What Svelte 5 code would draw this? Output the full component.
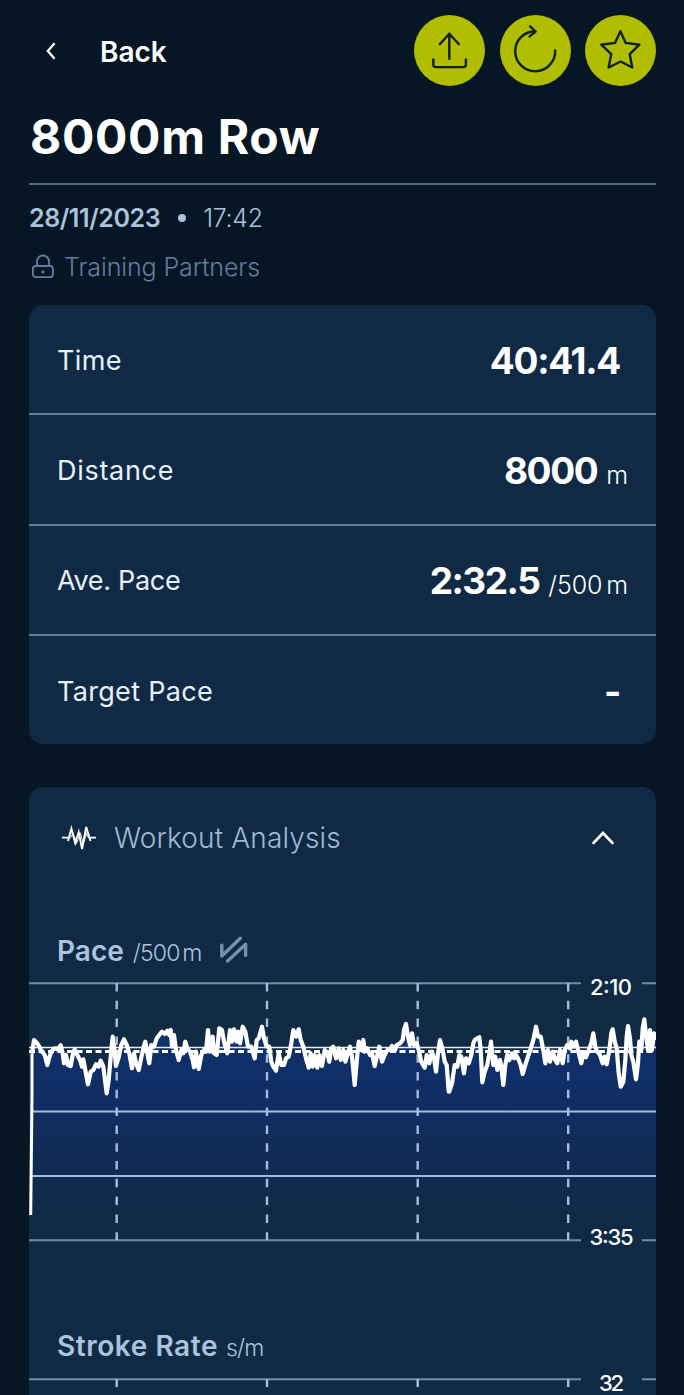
<script lang="ts">
	const stats = [
		{ label: 'Time', value: '40:41.4', unit: '', cls: 'time' },
		{ label: 'Distance', value: '8000', unit: 'm', cls: 'distance' },
		{ label: 'Ave. Pace', value: '2:32.5', unit: '/500 m', cls: 'pace' },
		{ label: 'Target Pace', value: '-', unit: '', cls: 'target' }
	];

	const splits = [87.7, 238, 388.7, 539.2];

	// pace samples, stored in thirds of a pixel relative to each section's origin
	const sections = [
		{ x: -9, y: -10, samples: [32,735,36,375,36,250,42,210,50,218,58,230,66,245,74,255,82,285,88,262,95,243,104,235,112,238,122,226,128,250,132,280,138,255,144,285,152,288,158,255,164,238,172,255,180,270,186,290,190,268,196,300,204,343,212,305,220,300,228,283,236,290,242,272,250,290,260,370,266,330,274,240,278,200,284,245,288,288,296,262,304,225,312,208,320,225,328,250,336,295,342,250,348,280,356,300,364,262,370,235,376,215,382,250,388,280,394,225,402,230,410,205,418,195,426,185,434,192,442,182,448,195,452,180,456,230,462,195,468,240,476,270,484,240,490,250,496,215,502,235,510,245,518,270,522,292,528,245,536,297,544,255,552,240,558,245,564,180,570,245,578,200,582,250,590,255,598,175,606,180,612,215,622,250,630,180,636,215,642,178,650,215,655,185] },
		{ x: 201, y: 20, samples: [30,130,38,80,46,95,54,140,64,140,74,175,80,120,86,115,96,80,102,115,110,140,118,140,124,185,130,200,138,212,146,160,154,195,162,195,168,175,176,170,184,130,190,90,198,110,206,88,212,120,220,140,228,175,236,203,242,160,248,200,254,165,262,203,268,165,276,198,284,150,292,160,298,185,304,145,310,140,318,175,326,145,332,180,340,150,346,185,352,165,360,140,366,170,374,255,382,165,386,125,392,150,400,120,404,155,412,145,420,165,426,160,434,198,442,165,448,140,456,185,464,165,472,150,480,150,486,138,494,152,500,135,510,130,518,120,522,90,528,72,534,110,540,135,546,100,552,135,560,130,566,150,574,185,584,203,590,165,598,190,606,155,612,175,618,215,624,160,630,120,638,150,644,185,650,195,656,275] },
		{ x: 411, y: -10, samples: [28,365,36,340,44,285,52,290,58,255,64,260,72,310,78,265,86,280,94,255,100,220,104,210,112,205,118,202,122,240,127,337,134,305,142,285,148,250,153,215,160,285,166,260,172,300,180,270,184,290,190,345,196,285,202,255,208,270,216,250,222,265,228,255,234,265,242,285,248,312,256,285,264,260,272,235,280,210,288,170,294,200,302,200,310,240,316,280,324,240,330,275,338,245,346,270,352,280,360,240,368,280,374,240,382,225,390,235,394,215,400,230,408,215,414,240,424,280,430,250,438,262,446,240,454,220,460,190,466,230,472,245,480,255,488,280,494,260,500,283,508,240,514,190,518,178,524,215,530,235,536,310,542,350,550,335,556,270,560,200,564,168,570,205,574,255,580,275,588,328,594,280,598,215,604,240,608,175,613,148,618,195,624,240,630,180,636,240,642,190,648,210] }
	];

	const points: string[] = [];
	for (const s of sections) {
		for (let i = 0; i < s.samples.length; i += 2) {
			points.push(`${(s.x + s.samples[i] / 3).toFixed(1)} ${(s.y + s.samples[i + 1] / 3).toFixed(1)}`);
		}
	}
	const start = 'M' + points.slice(0, 3).join('L');
	const line = 'M' + points.slice(2).join('L');
	const area = `${line}L627 260L3 260Z`;
</script>

<main class="screen">
	<header class="topbar">
		<button class="back" aria-label="Back">
			<svg width="10" height="18" viewBox="0 0 10 18"><path d="M8.6 1.2 1.8 9l6.8 7.8" /></svg>
			<span>Back</span>
		</button>
		<div class="actions">
			<button class="action" aria-label="Share">
				<svg viewBox="0 0 71 71"><path d="M35.3 43.8V18.8M25.8 29.2l9.5-10.4 9.6 10.4M19.3 44.5v5q0 2.6 2.6 2.6h27.4q2.6 0 2.6-2.6v-5" /></svg>
			</button>
			<button class="action" aria-label="Repeat">
				<svg viewBox="0 0 71 71"><path d="M55.2 35.5A20 20 0 1 1 35.2 16.2M30.2 11.3l5.4 5.3-6 4.8" /></svg>
			</button>
			<button class="action" aria-label="Favourite">
				<svg viewBox="0 0 71 71"><path d="m35.4 16.2 5.3 11.7 13.7 1.8-9.7 9.5 2.6 13.3-11.7-6-12 6 2.6-13.3-9.9-9.5 13.7-1.8z" /></svg>
			</button>
		</div>
	</header>

	<h1>8000m Row</h1>

	<p class="date"><strong>28/11/2023</strong><i class="dot"></i><span>17:42</span></p>
	<p class="partners">
		<svg width="24" height="26" viewBox="0 0 24 26"><path d="M6 12V7.5a6 6 0 0 1 12 0V12" /><rect x="1.9" y="12" width="20" height="11.2" rx="3" /><circle cx="12" cy="17.8" r="1.6" /></svg>
		<span>Training Partners</span>
	</p>

	<section class="card stats">
		{#each stats as s}
			<div class="row">
				<span class="label {s.cls}-label">{s.label}</span>
				<span class="value" class:has-unit={s.unit}>
					<b class={s.cls}>{s.value}</b>
					{#if s.unit}<small>{s.unit}</small>{/if}
				</span>
			</div>
		{/each}
	</section>

	<section class="card analysis">
		<div class="analysis-head">
			<svg class="pulse" width="36" height="26" viewBox="0 0 36 26">
				<path class="axis" d="M1 12.6h7M28.5 12.6H35" />
				<path d="M7 16 10.4 3.5l3.8 14.5L17.7 7l3.4 17L25.2 2l4.3 14" />
				<path class="echo" d="M6.5 12.6h2.7L12 8.5l3.6 9.5 3.9-9.5 2.8 10 3.2-10 2 4.1h3" />
			</svg>
			<h2>Workout Analysis</h2>
			<svg class="chevron" width="22" height="14" viewBox="0 0 22 14"><path d="m1.5 12 9.5-10 9.5 10" /></svg>
		</div>

		<div class="chart-title pace-title">
			<h3>Pace</h3>
			<small>/500 m</small>
			<svg width="30" height="28" viewBox="0 0 30 28"><path d="M2.8 10.2v10.8L21.3 3.2M8.6 26 26.6 9.2v11" /></svg>
		</div>
		<svg class="chart" width="627" height="270" viewBox="0 0 627 270">
			<defs>
				<linearGradient id="fill" gradientUnits="userSpaceOnUse" x1="0" y1="60" x2="0" y2="235">
					<stop offset="0" stop-color="#10306d" />
					<stop offset="0.35" stop-color="#102e63" />
					<stop offset="1" stop-color="#102a46" />
				</linearGradient>
			</defs>
			<rect width="627" height="257" y="3" class="plot" />
			<path d={area} class="area" fill="url(#fill)" />
			<path class="edge" d="M0 3.3h552M613 3.3h14M0 260.2h552M613 260.2h14" />
			<path class="grid first" d="M0 67.5h627" />
			<path class="grid" d="M3 131.5h624M3 196h624" />
			{#each splits as x}
				<path class="split" d="M{x} 3V260" />
			{/each}
			<path class="target-line" d="M0 71.5H627" />
			<path class="trace start" d={start} />
			<path class="trace" d={line} />
			<text x="561" y="15" textLength="42">2:10</text>
			<text x="560.5" y="265" textLength="44">3:35</text>
		</svg>

		<div class="chart-title rate-title">
			<h3>Stroke Rate</h3>
			<small>s/m</small>
		</div>
		<svg class="chart" width="627" height="40" viewBox="0 0 627 40">
			<path class="edge" d="M0 3.3h552M613 3.3h14" />
			{#each splits as x}
				<path class="split" d="M{x} 3v8" />
			{/each}
			<text x="570" y="14.5" textLength="25">32</text>
		</svg>
	</section>
</main>

<style>
	:global(body) { margin: 0; background: #061624; }
	.screen {
		box-sizing: border-box; width: 684px; height: 1395px; overflow: hidden;
		padding: 15px 28px 0 29px; background: #061624;
		font-family: Inter, 'Liberation Sans', sans-serif; color: #fff;
	}
	svg { fill: none; stroke: currentColor; flex: none; display: block; }
	button { border: 0; padding: 0; background: none; color: inherit; font: inherit; }

	.topbar { display: flex; justify-content: space-between; height: 71px; }
	.back { display: flex; align-items: center; gap: 44px; padding-left: 17px; font-size: 28px; font-weight: 600; letter-spacing: 0; }
	.back svg { stroke-width: 2.2; }
	.back span { padding-top: 2px; }
	.actions { display: flex; gap: 14.5px; }
	.action { width: 71px; height: 71px; border-radius: 50%; background: #b1bd00; color: #102020; }
	.action svg { width: 71px; height: 71px; stroke-width: 2.4; stroke-linecap: round; stroke-linejoin: round; }

	h1 { margin: 0; height: 97px; line-height: 101px; font-size: 48px; font-weight: 700; letter-spacing: 0.7px; text-indent: 1px; border-bottom: 2px solid #526c84; }
	p { margin: 0; display: flex; align-items: center; }
	.date { height: 65px; color: #a9c4dc; font-size: 25px; }
	.date strong { font-weight: 600; letter-spacing: -0.4px; }
	.date span { font-weight: 300; letter-spacing: -0.3px; }
	.dot { width: 8px; height: 8px; margin: 0 17.5px; border-radius: 50%; background: #a9c4dc; }
	.partners { height: 34px; margin-bottom: 21px; gap: 9px; padding-left: 2px; color: #657da0; font-size: 25px; font-weight: 300; letter-spacing: -0.1px; }
	.partners svg { stroke-width: 1.8; }
	.partners circle { fill: currentColor; stroke: none; }

	.card { background: #102a45; border-radius: 14px; }
	.stats { height: 439px; margin-bottom: 43px; }
	.row { box-sizing: border-box; height: 110.3px; display: flex; align-items: center; justify-content: space-between; padding: 2px 36px 0 28px; border-bottom: 2px solid #60809c; }
	.row:last-child { border-bottom: 0; height: 109px; }
	.label { font-size: 27px; font-weight: 400; color: #e8f1fa; }
	.time-label { letter-spacing: 0.4px; }
	.distance-label { letter-spacing: 0.7px; }
	.pace-label { letter-spacing: -0.3px; }
	.target-label { letter-spacing: 0.3px; }
	.value { display: flex; align-items: baseline; gap: 9px; }
	.value.has-unit { margin-right: -8px; }
	.value b { font-size: 37px; font-weight: 700; letter-spacing: -1.3px; }
	.value .distance { letter-spacing: -1.4px; }
	.value .pace { letter-spacing: -1.5px; }
	.value small { font-size: 25px; font-weight: 300; word-spacing: -3px; letter-spacing: -0.1px; }

	.analysis { height: 660px; overflow: hidden; }
	.analysis-head { display: flex; align-items: center; height: 102px; padding: 0 42.5px 0 32px; }
	.pulse { stroke-width: 1.9; margin-right: 17px; }
	.pulse .echo { stroke-width: 1.2; opacity: 0.75; }
	h2 { margin: 0; flex: 1; font-size: 28px; font-weight: 300; letter-spacing: 0.15px; color: #9fbad4; }
	.chevron { stroke-width: 2.6; stroke-linecap: round; }

	.chart-title { display: flex; align-items: baseline; padding-left: 28px; color: #a9c4dc; }
	.pace-title { height: 47px; padding-top: 44px; }
	.rate-title { height: 48px; padding-top: 78px; }
	.rate-title h3 { letter-spacing: 0.55px; }
	h3 { margin: 0; font-size: 28px; line-height: 36px; font-weight: 600; }
	.chart-title small { margin-left: 9px; font-size: 23px; line-height: 36px; font-weight: 300; letter-spacing: -0.8px; word-spacing: -3px; }
	.rate-title small { margin-left: 8px; }
	.chart-title svg { align-self: flex-start; margin: 2px 0 0 17px; stroke-width: 3.4; stroke-linecap: round; stroke-linejoin: round; color: #7590ae; }

	.chart { overflow: visible; }
	.area { stroke: none; }
	.plot { fill: #102b43; stroke: none; }
	.chart .edge { stroke: #6f8ea7; stroke-width: 2; }
	.chart .grid { stroke: #a5b9e0; stroke-width: 2; }
	.chart .grid.first { stroke: #e6edf9; stroke-width: 1.5; }
	.chart .split { stroke: #a9bbdc; stroke-width: 2.4; stroke-dasharray: 8.5 9.3; }
	.target-line { stroke: #fff; stroke-width: 3; stroke-dasharray: 6 3.5; }
	.trace { stroke: #fff; stroke-width: 4.2; stroke-linejoin: round; }
	.trace.start { stroke-width: 3; }
	text { fill: #fff; stroke: none; font-size: 22px; font-weight: 500; }
</style>
